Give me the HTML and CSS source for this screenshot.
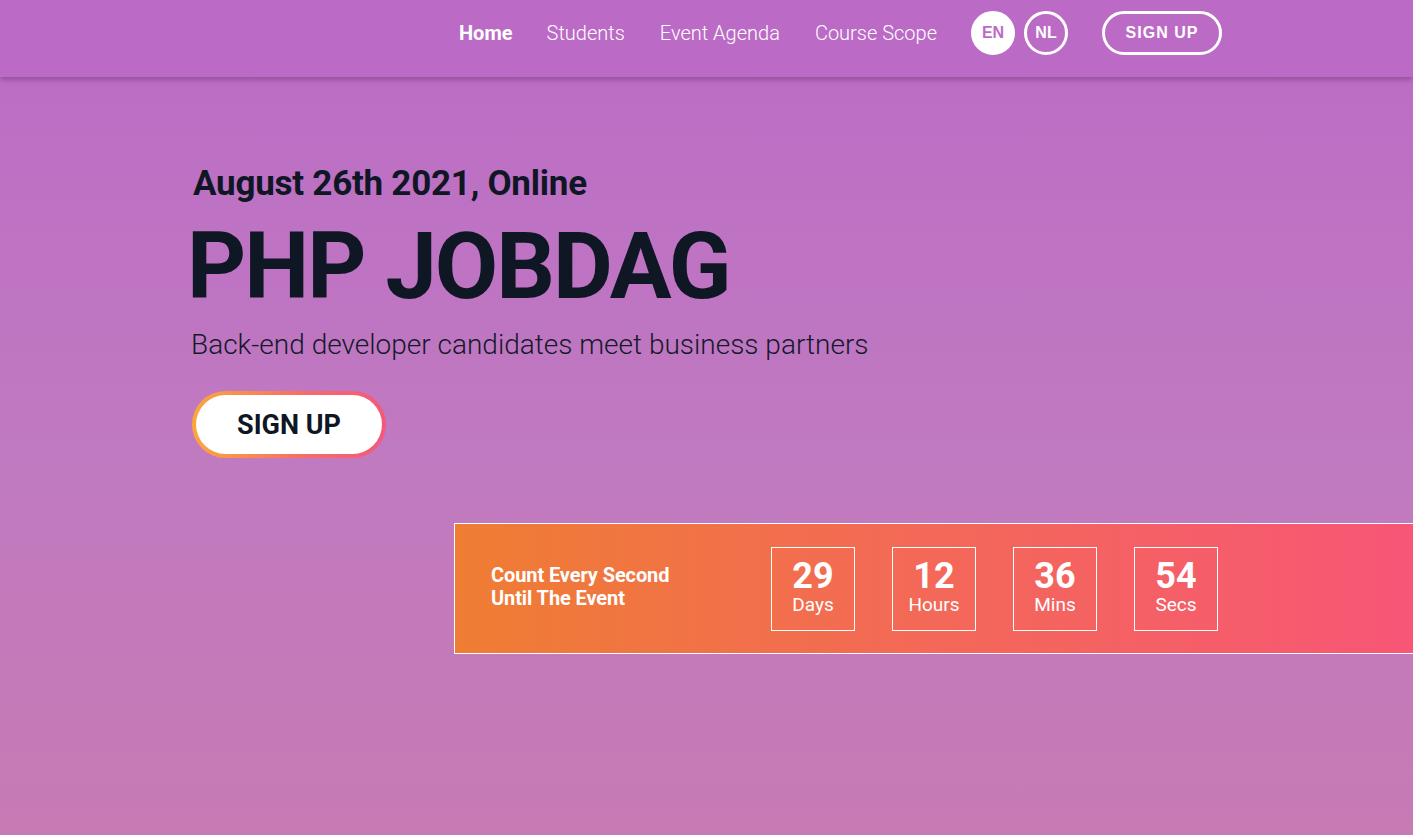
FILE: index.html
```html
<!DOCTYPE html>
<html lang="en">
<head>
<meta charset="utf-8">
<title>PHP JOBDAG</title>
<link rel="stylesheet" href="styles.css">
</head>
<body>
<header class="topbar">
  <nav class="nav">
    <a class="nav-link active" href="#">Home</a>
    <a class="nav-link" href="#">Students</a>
    <a class="nav-link" href="#">Event Agenda</a>
    <a class="nav-link" href="#">Course Scope</a>
    <div class="langs">
      <a class="lang lang-on" href="#">EN</a>
      <a class="lang" href="#">NL</a>
    </div>
    <a class="nav-signup" href="#">SIGN UP</a>
  </nav>
</header>
<main class="hero">
  <div class="hero-inner">
    <h2 class="date">August 26th 2021, Online</h2>
    <h1 class="title">PHP JOBDAG</h1>
    <p class="subtitle">Back-end developer candidates meet business partners</p>
    <a class="cta" href="#"><span class="cta-inner">SIGN UP</span></a>
  </div>
  <section class="countdown">
    <div class="cd-text">Count Every Second<br>Until The Event</div>
    <div class="cd-boxes">
      <div class="cd-box"><span class="cd-num">29</span><span class="cd-label">Days</span></div>
      <div class="cd-box"><span class="cd-num">12</span><span class="cd-label">Hours</span></div>
      <div class="cd-box"><span class="cd-num">36</span><span class="cd-label">Mins</span></div>
      <div class="cd-box"><span class="cd-num">54</span><span class="cd-label">Secs</span></div>
    </div>
  </section>
</main>
</body>
</html>
```
FILE: styles.css
```css
* { box-sizing: border-box; }
html, body { margin: 0; padding: 0; }
body {
  font-family: Roboto, "Liberation Sans", sans-serif;
  background: linear-gradient(180deg, #bb6bc6 0%, #c07ac0 55%, #c77ab4 100%);
  min-height: 835px;
  overflow: hidden;
}
a { text-decoration: none; }
.topbar {
  height: 77px;
  background: #bb6bc6;
  box-shadow: 0 3px 5px rgba(80, 30, 90, 0.35);
  position: relative;
  z-index: 2;
}
.nav {
  display: flex;
  align-items: center;
  height: 66px;
  padding-left: 459px;
}
.nav-link {
  color: #fff;
  font-size: 20px;
  font-weight: 300;
  margin-right: 35px;
}
.nav-link.active { font-weight: 700; margin-right: 34px; }
.langs { display: flex; gap: 9px; margin-left: -1px; }
.lang {
  width: 44px;
  height: 44px;
  border: 3px solid #fff;
  border-radius: 50%;
  display: flex;
  align-items: center;
  justify-content: center;
  color: #fff;
  font-family: "Liberation Sans", Arial, sans-serif;
  font-weight: 700;
  font-size: 16px;
}
.lang-on { background: #fff; color: #bb6bc6; }
.nav-signup {
  margin-left: 34px;
  width: 120px;
  height: 44px;
  border: 3px solid #fff;
  border-radius: 22px;
  display: flex;
  align-items: center;
  justify-content: center;
  color: #fff;
  font-family: "Liberation Sans", Arial, sans-serif;
  font-weight: 700;
  font-size: 16px;
  letter-spacing: 1px;
}
.hero { position: relative; }
.hero-inner { padding: 84px 0 0 190px; }
.date {
  margin: 0 0 0 3px;
  color: #0f1624;
  font-size: 35px;
  font-weight: 700;
  letter-spacing: -0.25px;
  line-height: 46px;
}
.title {
  margin: 10px 0 0 -3px;
  color: #0f1624;
  font-size: 92px;
  font-weight: 700;
  line-height: 100px;
  letter-spacing: -2px;
}
.subtitle {
  margin: 12px 0 0 1px;
  color: #141a2a;
  font-size: 28px;
  font-weight: 300;
  line-height: 32px;
}
.cta {
  display: inline-block;
  margin: 30px 0 0 2px;
  width: 194px;
  height: 67px;
  padding: 4px;
  border-radius: 34px;
  background: linear-gradient(90deg, #f9a83c 0%, #f66b6a 60%, #f3587c 100%);
}
.cta-inner {
  display: flex;
  align-items: center;
  justify-content: center;
  width: 100%;
  height: 100%;
  background: #fff;
  border-radius: 30px;
  color: #0f1624;
  font-size: 27px;
  font-weight: 700;
}
.countdown {
  margin: 65px 0 0 454px;
  height: 131px;
  border: 1px solid #fff;
  border-right: none;
  background: linear-gradient(90deg, #ef7d33 0%, #f36a55 45%, #f75676 100%);
  display: flex;
  align-items: center;
  padding-left: 36px;
}
.cd-text {
  width: 280px;
  color: #fff;
  font-size: 20px;
  font-weight: 700;
  line-height: 23px;
  margin-top: -4px;
  letter-spacing: -0.1px;
}
.cd-boxes { display: flex; gap: 37px; }
.cd-box {
  width: 84px;
  height: 84px;
  border: 1px solid #fff;
  display: flex;
  flex-direction: column;
  align-items: center;
  justify-content: center;
  padding-bottom: 4px;
  color: #fff;
}
.cd-num { font-size: 36px; font-weight: 700; line-height: 34px; }
.cd-label { font-size: 19px; font-weight: 400; line-height: 20px; margin-top: 2px; }
```
